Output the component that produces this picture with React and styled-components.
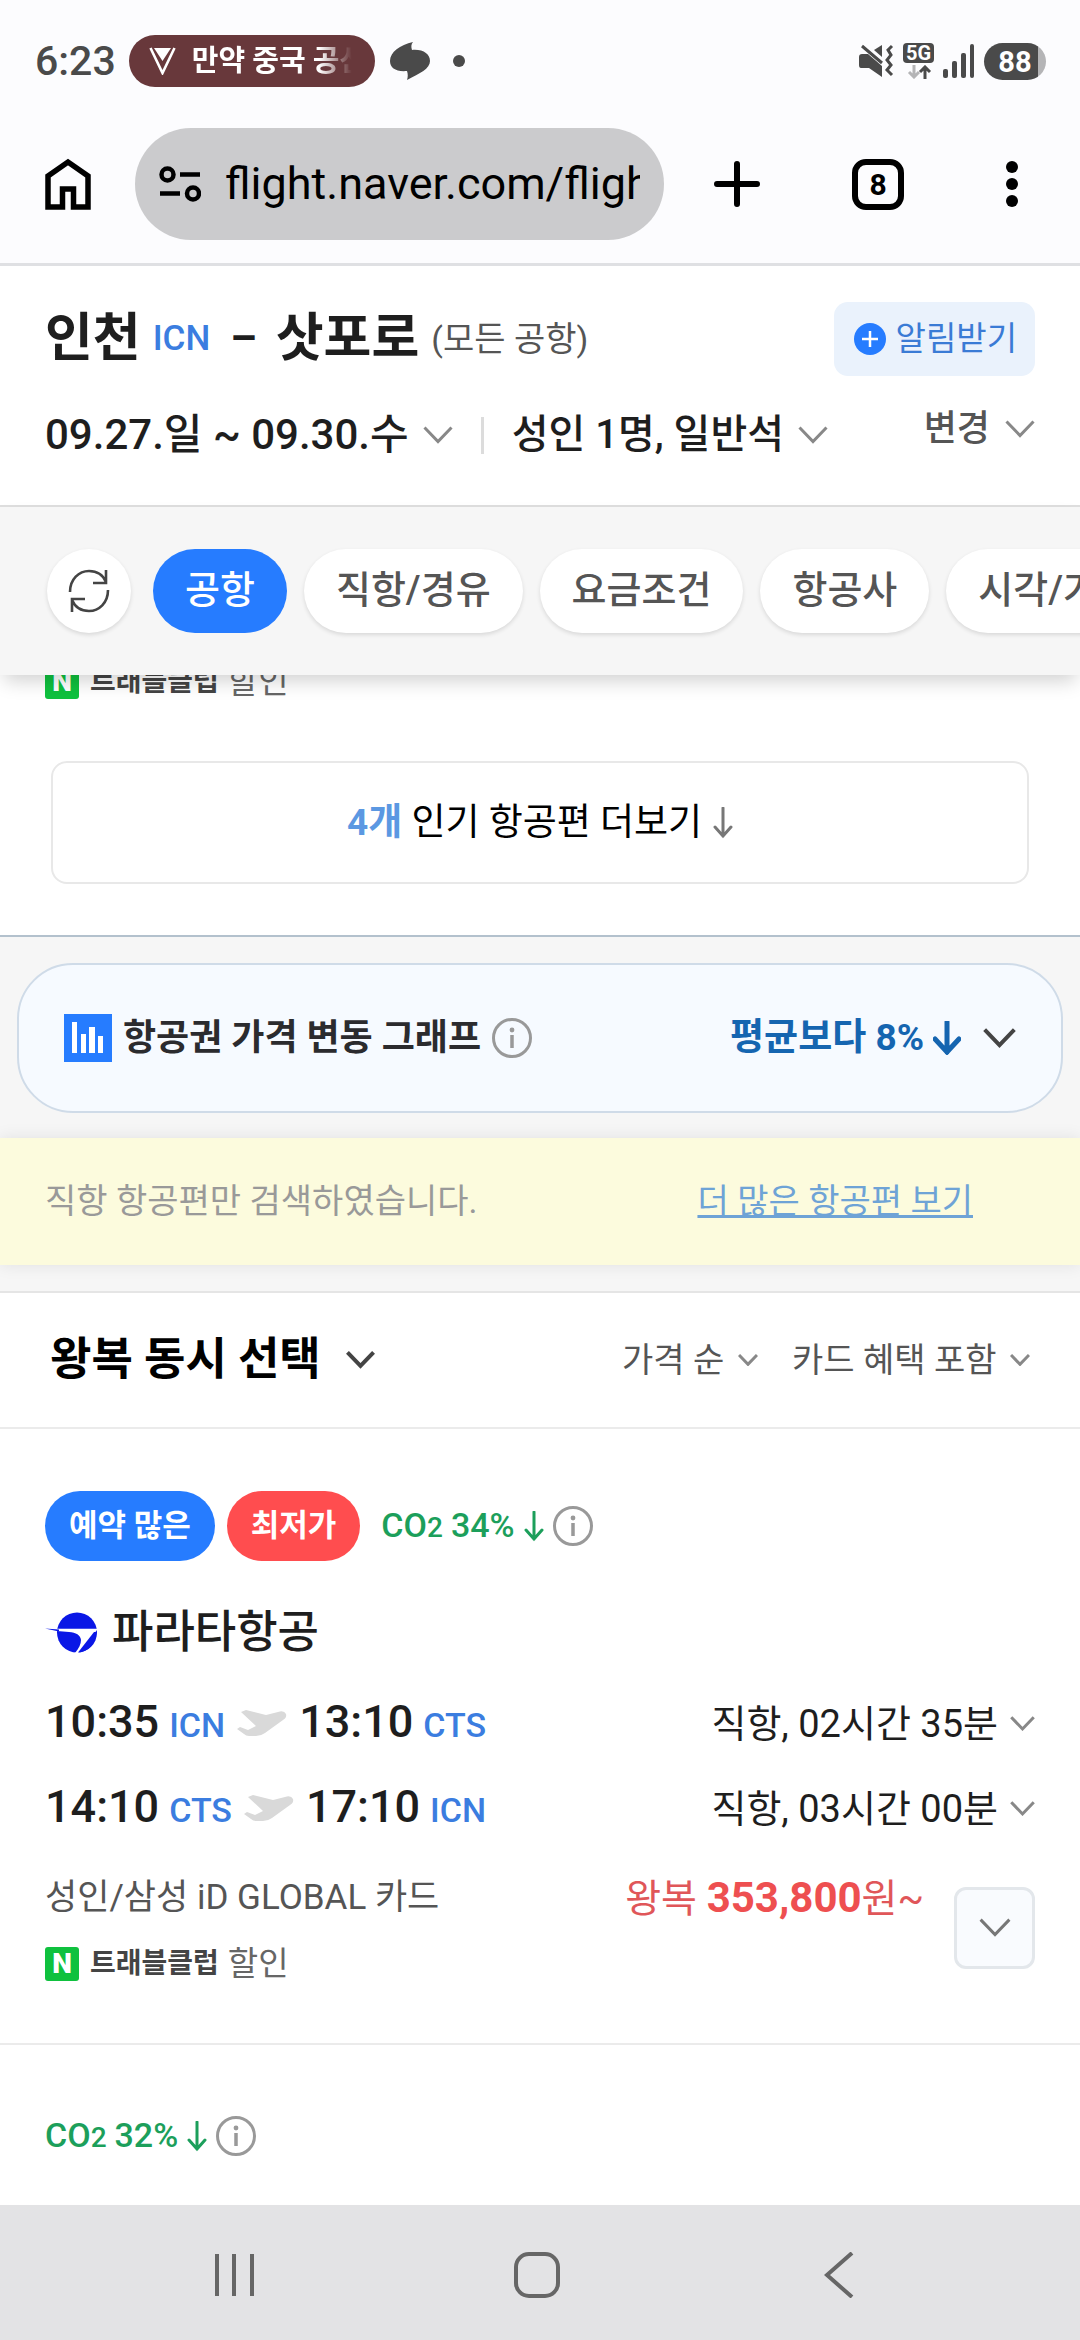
import React, { Component } from "react";
import styled, { createGlobalStyle } from "styled-components";

const GlobalStyle = createGlobalStyle`
  * {
    box-sizing: border-box;
  }
  body {
    margin: 0;
    background: #fff;
    color: #1e1e1e;
    font-family: Roboto, "Noto Sans CJK KR", sans-serif;
    line-height: 1.4;
  }
  button, input, select {
    margin: 0;
    padding: 0;
    border: 0;
    background: none;
    color: inherit;
    font: inherit;
  }
  svg {
    display: block;
    flex: none;
  }
`;

const Screen = styled.div`
  display: flex;
  flex-direction: column;
  height: 100vh;
  overflow: hidden;
`;

/* system status bar */
const StatusBar = styled.header`
  display: flex;
  align-items: center;
  flex: none;
  height: 122px;
  padding: 0 34px 0 35px;
  background: #fcfcfe;
  color: #4a4a4a;
`;
const Clock = styled.span`
  font-size: 41px;
  font-weight: 500;
  line-height: 48px;
`;
const NowBar = styled.div`
  display: flex;
  align-items: center;
  gap: 16px;
  width: 246px;
  height: 52px;
  margin: 0 15px 0 13px;
  padding: 0 20px;
  border-radius: 26px;
  background: #68383b;
  color: #fff;
`;
const NowText = styled.span`
  flex: 1;
  overflow: hidden;
  font-size: 29px;
  font-weight: 700;
  line-height: 42px;
  white-space: nowrap;
  mask-image: linear-gradient(to right, #000 78%, transparent 98%);
`;
const Dot = styled.span`
  width: 12px;
  height: 12px;
  margin-left: 23px;
  border-radius: 6px;
  background: #4a4a4a;
`;
const StatusIcons = styled.div`
  display: flex;
  align-items: center;
  gap: 9px;
  margin-left: auto;
`;
const Network = styled.div`
  display: flex;
  flex-direction: column;
  align-items: center;
  gap: 2px;
`;
const NetworkLabel = styled.span`
  width: 31px;
  height: 20px;
  border-radius: 4px;
  background: #4a4a4a;
  color: #fff;
  font-size: 20px;
  font-weight: 700;
  line-height: 20px;
  text-align: center;
`;
const Battery = styled.span`
  width: 62px;
  height: 37px;
  border-radius: 19px;
  background: linear-gradient(to right, #4a4a4a 87%, #b4b4b6 87%);
  color: #fff;
  font-size: 29px;
  font-weight: 700;
  line-height: 38px;
  text-align: center;
`;

/* browser toolbar */
const BrowserBar = styled.div`
  display: flex;
  align-items: center;
  flex: none;
  padding: 6px 62px 23px 45px;
  border-bottom: 3px solid #dfe0e3;
  background: #fcfcfe;
  color: #000;
`;
const AddressBox = styled.div`
  display: flex;
  align-items: center;
  flex: 1;
  gap: 24px;
  min-width: 0;
  height: 112px;
  margin: 0 50px 0 44px;
  padding: 0 24px;
  border-radius: 56px;
  background: #cbcbcd;
`;
const AddressInput = styled.input`
  flex: 1;
  min-width: 0;
  font-size: 45px;
  line-height: 56px;
  outline: none;
`;
const IconButton = styled.button`
  display: flex;
  align-items: center;
  justify-content: center;
  flex: none;
`;
const TabCount = styled.button`
  flex: none;
  width: 52px;
  height: 51px;
  margin: 0 102px 0 92px;
  border: 6px solid #000;
  border-radius: 14px;
  font-size: 30px;
  font-weight: 700;
  line-height: 39px;
`;

/* search summary */
const SearchHeader = styled.section`
  flex: none;
  padding: 36px 45px 34px;
  border-bottom: 2px solid #dedede;
  background: #fff;
`;
const RouteRow = styled.div`
  display: flex;
  align-items: center;
  justify-content: space-between;
`;
const Route = styled.h1`
  display: flex;
  align-items: center;
  margin: 0;
  font-size: 52px;
  font-weight: 700;
  line-height: 68px;
`;
const RouteCode = styled.span`
  margin: 0 20px 0 12px;
  color: #3b7de0;
  font-size: 35px;
  font-weight: 500;
`;
const RouteNote = styled.span`
  margin-left: 12px;
  color: #555;
  font-size: 34px;
  font-weight: 400;
`;
const RouteDash = styled.span`
  margin-right: 19px;
  font-size: 42px;
`;
const AlertButton = styled.button`
  display: flex;
  align-items: center;
  gap: 10px;
  height: 74px;
  padding: 0 18px 0 20px;
  border-radius: 14px;
  background: #eaf2fc;
  color: #3a7bd5;
  font-size: 33px;
`;
const ConditionRow = styled.div`
  display: flex;
  align-items: center;
  height: 72px;
  margin-top: 23px;
`;
const Condition = styled.button`
  display: flex;
  align-items: center;
  gap: 14px;
  font-size: ${props => (props.$date ? "42px" : "40px")};
  font-weight: 500;
  line-height: 60px;
`;
const Divider = styled.span`
  width: 3px;
  height: 37px;
  margin: 0 28px;
  background: #dcdcdc;
`;
const ChangeButton = styled.button`
  display: flex;
  align-items: center;
  align-self: flex-start;
  gap: 15px;
  margin-left: auto;
  color: #555;
  font-size: 36px;
  font-weight: 500;
  line-height: 60px;
`;

/* filters */
const FilterBar = styled.nav`
  position: relative;
  z-index: 1;
  display: flex;
  align-items: center;
  flex: none;
  gap: 22px;
  height: 168px;
  padding-left: 47px;
  background: #f6f6f6;
  box-shadow: 0 10px 18px -4px rgba(0, 0, 0, 0.18);
`;
const FilterList = styled.div`
  display: flex;
  flex: 1;
  gap: 17px;
  min-width: 0;
  padding: 6px 0;
  overflow: hidden;
`;
const Chip = styled.button`
  flex: none;
  height: 84px;
  padding: 0 32px;
  border-radius: 42px;
  background: ${props => (props.$active ? "#267cff" : "#fff")};
  box-shadow: ${props =>
    props.$active ? "none" : "0 2px 4px rgba(0, 0, 0, 0.12)"};
  color: ${props => (props.$active ? "#fff" : "#555")};
  font-size: 38px;
  font-weight: 500;
  white-space: nowrap;
`;
const RefreshButton = styled(IconButton)`
  width: 84px;
  height: 84px;
  border-radius: 42px;
  background: #fff;
  box-shadow: 0 2px 4px rgba(0, 0, 0, 0.12);
`;

/* results */
const Results = styled.main`
  flex: 1;
  min-height: 0;
  overflow: hidden;
`;
const PopularFlights = styled.section`
  margin-top: -11px;
  padding: 0 45px 51px;
  border-bottom: 2px solid #b3c1cd;
`;
const DiscountRow = styled.div`
  display: flex;
  align-items: center;
  height: 36px;
  color: #666;
  font-size: 33px;
  line-height: 36px;
`;
const NaverMark = styled.span`
  width: 34px;
  height: 34px;
  margin-right: 11px;
  border-radius: 3px;
  background: #0fc13e;
  color: #fff;
  font-size: 28px;
  font-weight: 900;
  line-height: 34px;
  text-align: center;
`;
const ClubName = styled.b`
  margin-right: 9px;
  color: #444;
  font-size: 28px;
`;
const MoreButton = styled.button`
  display: flex;
  align-items: center;
  justify-content: center;
  gap: 11px;
  width: calc(100% - 12px);
  height: 123px;
  margin: 61px 6px 0;
  border: 2px solid #e8e8e8;
  border-radius: 16px;
  color: #000;
  font-size: 37px;

  b {
    color: #5b98e2;
  }
`;
const GraphSection = styled.section`
  padding: 26px 17px 25px;
  background: #f6f6f6;
`;
const GraphCard = styled.div`
  display: flex;
  align-items: center;
  height: 150px;
  padding: 0 45px;
  border: 2px solid #cfdbe8;
  border-radius: 56px;
  background: #f6faff;
  color: #2b2b2e;
`;
const GraphTitle = styled.h2`
  margin: 0 11px;
  font-size: 36px;
  font-weight: 700;
`;
const GraphToggle = styled.button`
  display: flex;
  align-items: center;
  gap: 9px;
  margin-left: auto;
  color: #1565b0;
  font-size: 37px;
  font-weight: 700;

  svg:last-child {
    margin-left: 13px;
  }
`;
const Notice = styled.div`
  position: relative;
  display: flex;
  align-items: center;
  justify-content: space-between;
  height: 127px;
  padding: 0 107px 0 45px;
  background: #fcfbdd;
  box-shadow: 0 0 16px rgba(0, 0, 0, 0.09);
  color: #999;
  font-size: 34px;
`;
const NoticeLink = styled.a`
  color: #6ea3d6;
  text-decoration: underline;
  text-decoration-thickness: 3px;
  text-decoration-skip-ink: none;
`;
const Gap = styled.div`
  height: 26px;
  background: #f6f6f6;
`;
const SortBar = styled.div`
  display: flex;
  align-items: center;
  gap: 34px;
  height: 138px;
  padding: 0 50px;
  border-top: 2px solid #e5e5e5;
  border-bottom: 2px solid #ebebeb;
`;
const SelectBox = styled.label`
  display: flex;
  align-items: center;
  gap: ${props => (props.$title ? "25px" : "13px")};
  margin-right: ${props => (props.$title ? "auto" : "0")};
  color: ${props => (props.$title ? "#000" : "#555")};
  font-size: ${props => (props.$title ? "45px" : "34px")};
  font-weight: ${props => (props.$title ? 700 : 400)};

  select {
    appearance: none;
    line-height: 68px;
    outline: none;
  }
`;
const Ticket = styled.article`
  padding: 62px 45px 61px;
  border-bottom: 2px solid #ebebeb;
`;
const TagRow = styled.div`
  display: flex;
  align-items: center;
`;
const Tag = styled.span`
  height: 70px;
  margin-right: 12px;
  padding: 0 24px;
  border-radius: 35px;
  background: ${props => props.$color};
  color: #fff;
  font-size: 31px;
  font-weight: 700;
  line-height: 70px;
`;
const Carbon = styled.span`
  display: flex;
  align-items: center;
  gap: 9px;
  height: 58px;
  margin-left: ${props => (props.$indent ? "9px" : "0")};
  color: #1c9f5b;
  font-size: 34px;
  font-weight: 500;
  line-height: 40px;

  small {
    margin-right: 8px;
    font-size: 28px;
  }
`;
const Airline = styled.h3`
  display: flex;
  align-items: center;
  gap: 14px;
  height: 60px;
  margin: 41px 0 19px;
  font-size: 45px;
  font-weight: 500;
`;
const Leg = styled.div`
  display: flex;
  align-items: center;
  justify-content: space-between;
  height: 85px;
`;
const LegTimes = styled.div`
  display: flex;
  align-items: baseline;
  font-size: 45px;
  font-weight: 500;
  line-height: 62px;
`;
const Code = styled.span`
  margin-left: 10px;
  color: #3b7de0;
  font-size: 34px;
  font-weight: 500;
`;
const PlaneSlot = styled.span`
  align-self: center;
  margin: 0 12px;
`;
const Duration = styled.button`
  display: flex;
  align-items: center;
  gap: 12px;
  font-size: 38px;
  line-height: 62px;
`;
const Fare = styled.div`
  display: flex;
  align-items: flex-start;
  padding-top: 22px;
`;
const FareInfo = styled.div`
  display: flex;
  flex: 1;
  flex-direction: column;
  gap: 23px;
  color: #555;
  font-size: 35px;
  line-height: 50px;
`;
const Price = styled.div`
  color: #e05659;
  font-size: 39px;
  line-height: 50px;

  b {
    color: #ee4f50;
    font-size: 42px;
  }
`;
const ExpandButton = styled(IconButton)`
  width: 81px;
  height: 82px;
  margin: 14px 0 0 30px;
  border: 3px solid #e3e7eb;
  border-radius: 12px;
  background: #f9fbfe;
`;

/* system navigation */
const SystemNav = styled.footer`
  display: flex;
  align-items: center;
  justify-content: space-around;
  flex: none;
  height: 135px;
  padding: 4px 90px 0 84px;
  background: #e3e3e5;
`;
const NavButton = styled(IconButton)`
  width: 120px;
  height: 100px;
`;

const Chevron = ({ width = 30, color = "#888", weight = 3 }) => (
  <svg width={width} height={width * 0.6} viewBox="0 0 30 18" fill="none">
    <path
      d="M1.5 1.5 15 15.5 28.5 1.5"
      stroke={color}
      strokeWidth={weight}
      vectorEffect="non-scaling-stroke"
    />
  </svg>
);

const ArrowDown = ({ width = 20, height = 32, color = "#777", weight = 3 }) => (
  <svg width={width} height={height} fill="none">
    <path
      d={`M${width / 2} 1V${height - 3}M2 ${height - width / 2 - 2}L${width /
        2} ${height - 3}L${width - 2} ${height - width / 2 - 2}`}
      stroke={color}
      strokeWidth={weight}
      strokeLinecap="round"
    />
  </svg>
);

const InfoIcon = () => (
  <svg width="40" height="40" fill="none">
    <circle cx="20" cy="20" r="18.5" stroke="#999" strokeWidth="3" />
    <circle cx="20" cy="12" r="2.4" fill="#999" />
    <path d="M20 17v13" stroke="#999" strokeWidth="3.5" />
  </svg>
);

const PlaneIcon = () => (
  <svg width="50" height="27" viewBox="0 0 50 27">
    <path
      d="M4 2 9 0 29 5 41 2Q47 0 49 4 50 8 46 10L28 23Q24 26 19 26H12Q9 26 7 24L0 19 3 17 11 20 19 16Z"
      fill="#d9d9d9"
    />
  </svg>
);

const AirlineLogo = () => (
  <svg width="53" height="41" viewBox="0 0 53 41">
    <circle cx="32" cy="20.5" r="20" fill="#0a17e6" />
    <path
      d="M12 16.8H53L33.5 41H30C34 36 36 32 36 28 35.5 23 31 20.5 24 20L12 19Z"
      fill="#fff"
    />
    <path d="M49 20 33 40.5C43 40 50.5 32 51.5 20Z" fill="#0a17e6" />
    <path d="M0 16.5 14 17.5V19.5Z" fill="#0a17e6" />
  </svg>
);

const Discount = () => (
  <DiscountRow>
    <NaverMark>N</NaverMark>
    <ClubName>트래블클럽</ClubName>
    할인
  </DiscountRow>
);

const CarbonInfo = ({ value, indent }) => (
  <Carbon $indent={indent}>
    <span>
      CO<small>2</small>
      {value}%
    </span>
    <ArrowDown height={31} color="#1c9f5b" />
    <InfoIcon />
  </Carbon>
);

const filters = ["공항", "직항/경유", "요금조건", "항공사", "시각/가격"];

const legs = [
  { start: "10:35", from: "ICN", end: "13:10", to: "CTS", time: "02시간 35분" },
  { start: "14:10", from: "CTS", end: "17:10", to: "ICN", time: "03시간 00분" }
];

class App extends Component {
  state = { filter: "공항" };

  renderStatusBar() {
    return (
      <StatusBar>
        <Clock>6:23</Clock>
        <NowBar>
          <svg width="27" height="28" viewBox="0 0 27 28">
            <path d="M5 1H22L13.5 14Z" fill="#fff" />
            <path
              d="M1.5 1 13.5 26 25.5 1"
              fill="none"
              stroke="#fff"
              strokeWidth="2.6"
            />
          </svg>
          <NowText>만약 중국 공산당</NowText>
        </NowBar>
        <svg width="40" height="38" viewBox="0 0 40 38">
          <path
            d="M23 0C21 2 21 5 22 8 33 7 40 12 40 19 40 27 30 31 17 38 18 35 18 32 17 29 6 30 0 26 0 19 0 10 10 3 23 0Z"
            fill="#4a4a4a"
          />
        </svg>
        <Dot />
        <StatusIcons>
          <svg width="35" height="34" viewBox="0 0 35 34" fill="#4a4a4a">
            <path d="M0 13Q0 10 3 10H9L23 22V33L10 24H2Q0 24 0 21Z" />
            <path d="M15 6 23 1V13Z" />
            <path
              d="M3 2 23 19M33 2 29 6 32 11 28 16 32 21 28 26 33 31"
              fill="none"
              stroke="#4a4a4a"
              strokeWidth="3"
            />
          </svg>
          <Network>
            <NetworkLabel>5G</NetworkLabel>
            <svg width="26" height="14" viewBox="0 0 26 14" fill="none">
              <path d="M8 0v12M3 7l5 5 5-5" stroke="#b4b4b6" strokeWidth="3" />
              <path d="M19 14V2M14 7l5-5 5 5" stroke="#4a4a4a" strokeWidth="3" />
            </svg>
          </Network>
          <svg width="32" height="34" fill="#4a4a4a">
            <rect y="25" width="5" height="9" rx="2" />
            <rect x="9" y="17" width="5" height="17" rx="2" />
            <rect x="18" y="9" width="5" height="25" rx="2" />
            <rect x="27" width="4" height="34" rx="2" />
          </svg>
          <Battery>88</Battery>
        </StatusIcons>
      </StatusBar>
    );
  }

  renderBrowserBar() {
    return (
      <BrowserBar>
        <IconButton aria-label="홈">
          <svg width="46" height="52" viewBox="0 0 46 52" fill="none">
            <path
              d="M3 18 23 4 43 18V49H28.5V31H17.5V49H3Z"
              stroke="#000"
              strokeWidth="5.5"
            />
          </svg>
        </IconButton>
        <AddressBox>
          <svg width="42" height="36" viewBox="0 0 42 36" fill="none">
            <g stroke="#000" strokeWidth="4.5">
              <circle cx="8.5" cy="8.5" r="6" />
              <circle cx="34" cy="27.5" r="6" />
              <path d="M21 8.5H41M1 27.5H21" />
            </g>
          </svg>
          <AddressInput
            aria-label="주소"
            readOnly
            value="flight.naver.com/flights/international"
          />
        </AddressBox>
        <IconButton aria-label="새 탭">
          <svg width="46" height="46" viewBox="0 0 46 46">
            <path
              d="M23 3V43M3 23H43"
              stroke="#000"
              strokeWidth="6"
              strokeLinecap="round"
            />
          </svg>
        </IconButton>
        <TabCount>8</TabCount>
        <IconButton aria-label="메뉴">
          <svg width="12" height="46">
            <circle cx="6" cy="6" r="6" />
            <circle cx="6" cy="23" r="6" />
            <circle cx="6" cy="40" r="6" />
          </svg>
        </IconButton>
      </BrowserBar>
    );
  }

  renderSearchHeader() {
    return (
      <SearchHeader>
        <RouteRow>
          <Route>
            인천<RouteCode>ICN</RouteCode>
            <RouteDash>–</RouteDash>
            삿포로<RouteNote>(모든 공항)</RouteNote>
          </Route>
          <AlertButton>
            <svg width="32" height="32" viewBox="0 0 32 32">
              <circle cx="16" cy="16" r="16" fill="#267cff" />
              <path d="M16 8V24M8 16H24" stroke="#fff" strokeWidth="2.5" />
            </svg>
            알림받기
          </AlertButton>
        </RouteRow>
        <ConditionRow>
          <Condition $date>
            09.27.일 ~ 09.30.수 <Chevron />
          </Condition>
          <Divider />
          <Condition>
            성인 1명, 일반석 <Chevron />
          </Condition>
          <ChangeButton>
            변경 <Chevron />
          </ChangeButton>
        </ConditionRow>
      </SearchHeader>
    );
  }

  renderFilters() {
    const { filter } = this.state;

    return (
      <FilterBar>
        <RefreshButton aria-label="초기화">
          <svg width="42" height="44" viewBox="0 0 42 44" fill="none">
            <g stroke="#444" strokeWidth="2.6">
              <path d="M2 23C2 10 11 2 21 2 29 2 35 6 38 13M38 1V14H25" />
              <path d="M40 21C40 34 31 42 21 42 13 42 7 38 4 31M4 43V30H17" />
            </g>
          </svg>
        </RefreshButton>
        <FilterList>
          {filters.map(name => (
            <Chip
              key={name}
              $active={name === filter}
              onClick={() => this.setState({ filter: name })}
            >
              {name}
            </Chip>
          ))}
        </FilterList>
      </FilterBar>
    );
  }

  renderGraph() {
    return (
      <GraphSection>
        <GraphCard>
          <svg width="48" height="48" viewBox="0 0 48 48">
            <rect width="48" height="48" fill="#267cff" />
            <path
              d="M8 8h5v31H8zM17 20h5v19h-5zM25 13h6v26h-6zM34 22h5v17h-5z"
              fill="#fff"
            />
          </svg>
          <GraphTitle>항공권 가격 변동 그래프</GraphTitle>
          <InfoIcon />
          <GraphToggle>
            평균보다 8%
            <ArrowDown width={28} height={34} color="#1565b0" weight={5} />
            <Chevron width={33} color="#444" weight={4} />
          </GraphToggle>
        </GraphCard>
      </GraphSection>
    );
  }

  renderSortBar() {
    return (
      <SortBar>
        <SelectBox $title>
          <select aria-label="선택 방식">
            <option>왕복 동시 선택</option>
          </select>
          <Chevron width={29} color="#444" weight={4} />
        </SelectBox>
        <SelectBox>
          <select aria-label="정렬">
            <option>가격 순</option>
          </select>
          <Chevron width={20} />
        </SelectBox>
        <SelectBox>
          <select aria-label="카드 혜택">
            <option>카드 혜택 포함</option>
          </select>
          <Chevron width={20} />
        </SelectBox>
      </SortBar>
    );
  }

  renderTicket() {
    return (
      <Ticket>
        <TagRow>
          <Tag $color="#267cff">예약 많은</Tag>
          <Tag $color="#ff4d4f">최저가</Tag>
          <CarbonInfo value={34} indent />
        </TagRow>
        <Airline>
          <AirlineLogo />
          파라타항공
        </Airline>
        {legs.map(leg => (
          <Leg key={leg.start}>
            <LegTimes>
              {leg.start}
              <Code>{leg.from}</Code>
              <PlaneSlot>
                <PlaneIcon />
              </PlaneSlot>
              {leg.end}
              <Code>{leg.to}</Code>
            </LegTimes>
            <Duration>
              직항, {leg.time}
              <Chevron width={25} />
            </Duration>
          </Leg>
        ))}
        <Fare>
          <FareInfo>
            성인/삼성 iD GLOBAL 카드
            <Discount />
          </FareInfo>
          <Price>
            왕복 <b>353,800</b>원~
          </Price>
          <ExpandButton aria-label="펼치기">
            <Chevron width={32} color="#777" />
          </ExpandButton>
        </Fare>
      </Ticket>
    );
  }

  render() {
    return (
      <Screen>
        <GlobalStyle />
        {this.renderStatusBar()}
        {this.renderBrowserBar()}
        {this.renderSearchHeader()}
        {this.renderFilters()}
        <Results>
          <PopularFlights>
            <Discount />
            <MoreButton>
              <span>
                <b>4개</b> 인기 항공편 더보기
              </span>
              <ArrowDown />
            </MoreButton>
          </PopularFlights>
          {this.renderGraph()}
          <Notice>
            직항 항공편만 검색하였습니다.
            <NoticeLink href="#all">더 많은 항공편 보기</NoticeLink>
          </Notice>
          <Gap />
          {this.renderSortBar()}
          {this.renderTicket()}
          <Ticket>
            <CarbonInfo value={32} />
          </Ticket>
        </Results>
        <SystemNav>
          <NavButton aria-label="최근 앱">
            <svg width="42" height="44">
              <path d="M3 1V43M20 1V43M38 1V43" stroke="#666" strokeWidth="4" />
            </svg>
          </NavButton>
          <NavButton aria-label="홈 화면">
            <svg width="46" height="46" fill="none">
              <rect
                x="2"
                y="2"
                width="42"
                height="42"
                rx="13"
                stroke="#666"
                strokeWidth="4"
              />
            </svg>
          </NavButton>
          <NavButton aria-label="뒤로">
            <svg width="30" height="46" fill="none">
              <path d="M28 1 3 23 28 45" stroke="#666" strokeWidth="4" />
            </svg>
          </NavButton>
        </SystemNav>
      </Screen>
    );
  }
}

export default App;
